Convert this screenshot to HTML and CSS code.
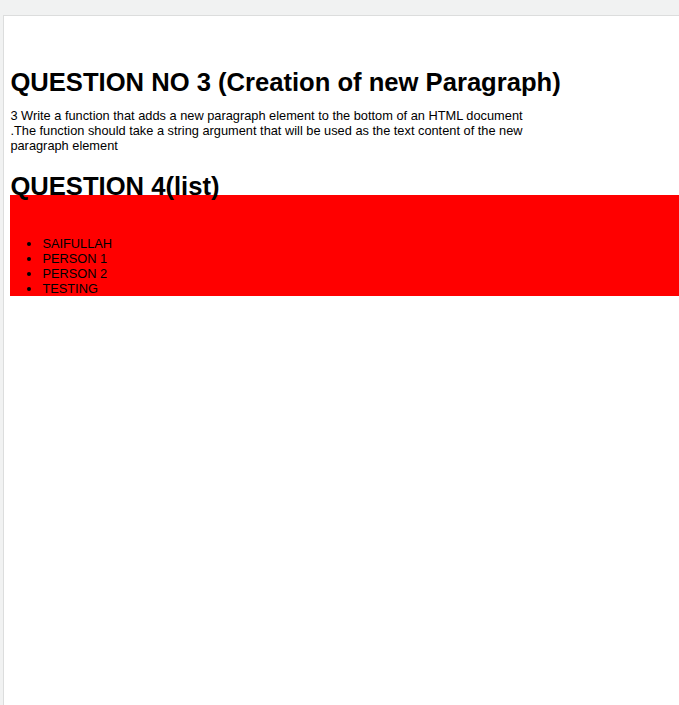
FILE: index.html
```html
<!DOCTYPE html>
<html lang="en">
<head>
<meta charset="utf-8">
<title>Questions</title>
<link rel="stylesheet" href="styles.css">
</head>
<body>
<div class="frame">
  <h1 class="heading heading-first">QUESTION NO 3 (Creation of new Paragraph)</h1>
  <p class="text">3 Write a function that adds a new paragraph element to the bottom of an HTML document<br>.The function should take a string argument that will be used as the text content of the new<br>paragraph element</p>
  <h1 class="heading heading-list">QUESTION 4(list)</h1>
  <div class="red-box">
    <ul class="names">
      <li>SAIFULLAH</li>
      <li>PERSON 1</li>
      <li>PERSON 2</li>
      <li>TESTING</li>
    </ul>
  </div>
</div>
</body>
</html>
```
FILE: styles.css
```css
html, body {
  margin: 0;
  padding: 0;
  overflow: hidden;
  background: #f1f2f2;
  height: 705px;
}

.frame {
  margin: 15px 0 0 3px;
  border-top: 1px solid #dcdddd;
  border-left: 1px solid #dcdddd;
  background: #ffffff;
  height: 720px;
  padding: 6.4px 0 6.4px 6.4px;
  box-sizing: border-box;
  font-family: "Liberation Sans", Arial, sans-serif;
  color: #000;
}

.heading {
  font-size: 25.6px;
  font-weight: bold;
  line-height: normal;
}

.heading-first {
  margin: 46px 0 10.4px;
}

.text {
  font-size: 12.8px;
  line-height: normal;
  margin: 0;
}

.heading-list {
  margin: 19.3px 0 -6.4px;
  white-space: nowrap;
}

.red-box {
  background: #ff0000;
  padding-top: 41.2px;
}

.names {
  margin: 0;
  padding-left: 32px;
  font-size: 12.8px;
  line-height: normal;
}
```
